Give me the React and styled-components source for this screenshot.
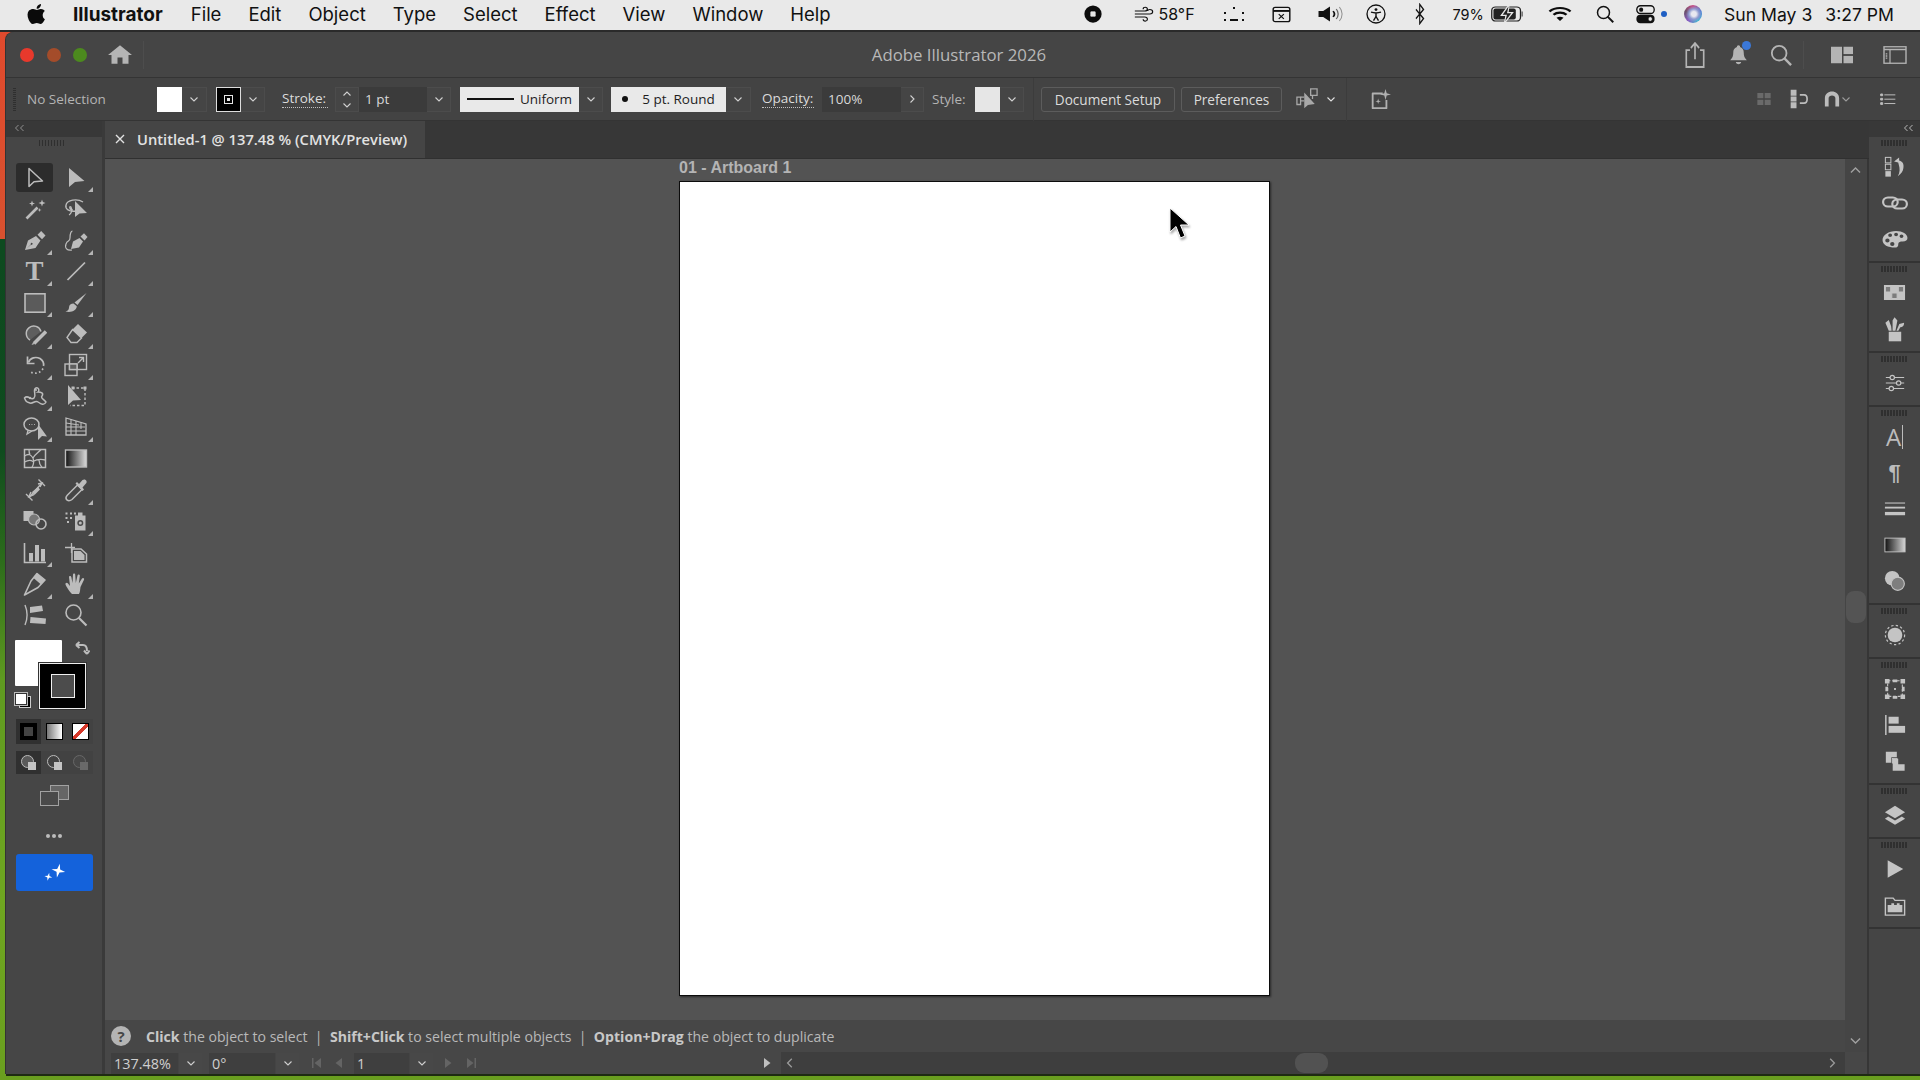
import React from 'react'
import styled, { createGlobalStyle } from 'styled-components'

const GlobalStyle = createGlobalStyle`
    html, body {
        margin: 0;
        padding: 0;
        background: #4a7a18;
    }
    * {
        box-sizing: border-box;
    }
`

const UI_FONT = `"Open Sans", "Noto Sans", sans-serif`
const MAC_FONT = `Inter, "Liberation Sans", sans-serif`

// every icon is drawn in a 24 box, filled parts use currentColor
const F = { fill: 'currentColor', stroke: 'none' }

const ICONS = {
    selection: <path d="M6 2.5V20.5L11 15.8L19.5 15Z" strokeWidth="1.5" strokeLinejoin="round" />,
    direct: <path d="M5 2V21L11 16L20.5 15Z" {...F} />,
    wand: <>
        <path d="M3.5 21.5L14.5 10.5" strokeWidth="2.6" />
        <path d="M9 3.5l.8 2.2 2.2.8-2.2.8L9 9.5l-.8-2.2L6 6.5l2.2-.8zM19 2.5l.9 2.6 2.6.9-2.6.9-.9 2.6-.9-2.6-2.6-.9 2.6-.9zM16.5 11l.5 1.5 1.5.5-1.5.5-.5 1.5-.5-1.5-1.5-.5 1.5-.5z" {...F} />
    </>,
    lasso: <>
        <path d="M12 14C5 15 1 12 2 8C3 3 13 1 19 5" strokeWidth="1.4" />
        <path d="M5 18C7 17 9 13 7 10C5 8 5 13 9 13" strokeWidth="1.2" />
        <path d="M11 4V20L15.5 16.5L23 16Z" {...F} />
    </>,
    pen: <>
        <path d="M2 22L5 12.5L13 8L17.5 12.5L12.5 20ZM7.8 16.5L3.6 20.6L8 16.8C8.6 17.2 9.6 16.8 9.6 15.8C9.6 14.7 8.2 14.4 7.8 15.4C7.6 15.8 7.6 16.2 7.8 16.5Z" fillRule="evenodd" {...F} />
        <path d="M14.5 6.8L19 11.3L22.5 7.5L18.2 3Z" {...F} />
    </>,
    curvature: <>
        <path d="M7 21L9 13.5L15.5 10L19 13.5L15 19.5Z" {...F} />
        <path d="M16.5 8.5L20.5 12.5L23.5 9L20 5.3Z" {...F} />
        <path d="M8 22C3 23 0.5 20 2 16C3.5 12 6 14 6 10C6 6 7 3 8.5 3" strokeWidth="1.2" />
    </>,
    line: <path d="M3.5 21L21 3.5" strokeWidth="1.7" />,
    rect: <rect x="2" y="2.8" width="20" height="18.4" fill="#5b5b5b" strokeWidth="1.6" />,
    brush: <>
        <path d="M22.5 2L13.5 14L10.5 11.5Z" {...F} />
        <path d="M9.5 12.5L12.8 15.2C12.5 19 8 22 1.5 20.5C4.5 19.5 5 18 5 16.5C5 14 7 12.5 9.5 12.5Z" {...F} />
    </>,
    shaper: <>
        <path d="M18 9.5A7.5 7.5 0 1 0 7 18" fill="#5e5e5e" strokeWidth="1.5" />
        <path d="M11 21.5L23 9.5" strokeWidth="3.6" />
        <path d="M8.5 23L10 20.5L11.5 22Z" {...F} />
    </>,
    eraser: <>
        <path d="M14 2L23 10.5L17.5 16L8.5 7.5Z" {...F} />
        <path d="M8.5 7.5L17.5 16L13 20.5H7L3 15.5Z" strokeWidth="1.4" />
    </>,
    rotate: <>
        <path d="M5.5 9.5C7 4.5 13 3.5 17 5.5C20 7.5 21 10.5 20.5 13" strokeWidth="1.7" />
        <path d="M4.5 3.5V10.5H11.5" strokeWidth="1.7" />
        <path d="M20 15.5C17 21 10 21.5 6.5 18" strokeWidth="1.7" strokeDasharray="1.6 2.4" />
    </>,
    scale: <>
        <rect x="5.5" y="1.5" width="17" height="15" strokeWidth="1.4" />
        <rect x="1" y="11" width="12" height="11.5" strokeWidth="1.4" />
        <rect x="5.5" y="11" width="7.5" height="5.5" fill="#5e5e5e" strokeWidth="1.4" />
        <path d="M14 10L19 5M15 4.5H19.5V9" strokeWidth="1.4" />
    </>,
    warp: <>
        <path d="M1.5 14C5 10 8 17 11 14C14 11 9 6 13 4C16 3 16.5 7 15 8C18 8 21 9 19 12C17 14 22 16 23 18C21 22 18 20 15 18C12 16 10 20 7 19C4 18 3 18 1.5 14Z" strokeWidth="1.5" />
        <circle cx="13" cy="6" r="1" {...F} />
        <circle cx="7" cy="14" r="1.2" {...F} />
    </>,
    freeTransform: <>
        <path d="M4 1V21L9 16.5L17 16Z" {...F} />
        <path d="M8 4H21V17" strokeWidth="1.4" strokeDasharray="2.5 2" />
        <path d="M21 18V21.5H6" strokeWidth="1.4" strokeDasharray="2.5 2" />
        <rect x="7.5" y="2.5" width="3" height="3" {...F} />
        <rect x="19.5" y="2.5" width="3" height="3" {...F} />
    </>,
    shapeBuilder: <>
        <ellipse cx="8.5" cy="8.5" rx="7.5" ry="6.5" strokeWidth="1.5" />
        <path d="M15 8L15 24L19 20L24 20.5Z" {...F} />
        <path d="M6 8.5h.9M8.5 8.5h.9M11 8.5h.9" strokeWidth="1.2" />
        <path d="M5 14.5L4 18L9 15" strokeWidth="1.3" />
    </>,
    perspective: <>
        <path d="M2 2L22 8V19H2Z" strokeWidth="1.3" />
        <path d="M2 7L15 9M2 11H21M2 15H22M7 3.5V19M12 5V19M17 6.5V13" strokeWidth="1.1" />
    </>,
    mesh: <>
        <rect x="1.5" y="2.5" width="21" height="18" strokeWidth="1.5" />
        <path d="M1.5 9C6 6 8 8 10 11C12 7 16 5 18 2.5M10 11C11 14 11 17 9 20.5M1.5 15C5 13 8 13 10 14.5C14 12 18 12 22.5 13M16 13C16 16 17 18 19 20.5M6 2.5C6 5 6 6 7 7.5" strokeWidth="1.3" />
    </>,
    gradient: <>
        <defs>
            <linearGradient id="toolGrad">
                <stop offset="0" stopColor="#111" />
                <stop offset="1" stopColor="#dcdcdc" />
            </linearGradient>
        </defs>
        <rect x="1.5" y="3" width="21" height="17" fill="url(#toolGrad)" strokeWidth="1.4" />
    </>,
    measure: <>
        <path d="M3 16L9.5 22.5M15.5 1.5L22 8" strokeWidth="1.4" />
        <path d="M7 18.5L18.5 5.5" strokeWidth="1.5" />
        <path d="M9 14L15 9L17 11.5L11.5 17Z" {...F} />
        <path d="M8 14L6 18.5L11 16.5M17 9L19 5L15 6" strokeWidth="1.5" />
    </>,
    eyedropper: <>
        <path d="M13.5 7L18 11.5L8 21.5C6 23 3.5 23 2.5 21.5C1.5 20 2 18.5 3.5 17Z" strokeWidth="1.5" />
        <path d="M11.5 5.5L13 4L15 6L18.5 2C20 1 22 1.5 22.5 3C23 4.5 22 5.5 21.5 6L18.5 9.5L20 11.5L18.5 13Z" {...F} />
    </>,
    blend: <>
        <rect x="0.5" y="2" width="10" height="10" {...F} />
        <circle cx="11" cy="10.5" r="5.5" fill="#777" strokeWidth="1.2" />
        <circle cx="18" cy="15" r="5" strokeWidth="1.6" />
    </>,
    symbol: <>
        <path d="M14 6.5V3.5H18.5V6.5H21.5V21.5H11V6.5Z" {...F} />
        <circle cx="16.3" cy="14" r="3" fill="#4a4a4a" stroke="none" />
        <circle cx="16.3" cy="14" r="1.5" {...F} />
        <path d="M1.5 3.5h2v2h-2zM6 3.5h2v2H6zM10 3.5h2v2h-2zM1.5 8h2v2h-2zM6 8h2v2H6zM3 12h2v2H3z" {...F} />
    </>,
    graph: <>
        <path d="M1.5 2V21.5H23" strokeWidth="1.6" />
        <rect x="6" y="12" width="4" height="8.5" {...F} />
        <rect x="12" y="4" width="4" height="16.5" {...F} />
        <rect x="18" y="8" width="4" height="12.5" {...F} />
    </>,
    artboard: <>
        <path d="M1 6.5H11M7.5 2V12" strokeWidth="1.3" />
        <path d="M8 8H17L22.5 13V21H8Z" strokeWidth="1.5" />
        <path d="M10 10H16.5L20.5 14V19H10Z" {...F} />
    </>,
    slice: <>
        <path d="M1.5 23L8 9L14 1.5L22 8L15 15.5Z" strokeWidth="1.6" strokeLinejoin="round" />
        <path d="M14 1.5L22 8L18 12.5L10.5 6Z" {...F} />
    </>,
    hand: <path d="M7 21C5 19 2 14 1.5 12.5C1 11 3 10 4 11.5L6 14L5 5C5 3.5 7 3.5 7.3 5L8.5 11L9 2.5C9 1 11.2 1 11.2 2.5L11.8 11L13.5 3.5C14 2 16 2.5 15.8 4L14.8 11.5L18 6.5C19 5.3 20.7 6.3 20 7.8L16.5 15C16 19 16 20 15 22H8Z" {...F} />,
    alignStack: <>
        <path d="M2 2C4.5 8 4.5 16 2 22" strokeWidth="1.4" />
        <path d="M7 4L19 2.5L20 8L7 10ZM7.5 14L23 15.5L22.5 21L7 20Z" {...F} />
    </>,
    zoom: <>
        <circle cx="9.5" cy="9.5" r="7.5" strokeWidth="1.6" />
        <path d="M15 15L22.5 22.5" strokeWidth="2.2" />
    </>,
    // right hand dock
    history: <>
        <rect x="1.5" y="1.5" width="6" height="6" strokeWidth="1.1" />
        <rect x="1.5" y="9" width="6" height="6" strokeWidth="1.1" />
        <rect x="1.5" y="16.5" width="6" height="6" {...F} />
        <path d="M11 6L16.5 1.5V5C21 6 22 10 21 14C20.5 17 19 19.5 15 22C17.5 18 17.5 14 16 9L15.5 7Z" {...F} />
    </>,
    link: <>
        <rect x="1" y="6.5" width="13.5" height="9" rx="4.5" strokeWidth="2" />
        <rect x="9.5" y="8.5" width="13.5" height="9" rx="4.5" strokeWidth="2" />
    </>,
    palette: <path fillRule="evenodd" d="M13 4C6 4 0.5 8 0.5 13C0.5 18 5.5 20.5 12 20.5C15 20.5 15 18.5 15 17C15 15 17 14.5 19 14.5C22 14.5 23.5 13 23.5 11C23.5 7 19 4 13 4ZM5 11.5A2 2 0 1 0 5 15.5A2 2 0 1 0 5 11.5ZM9.5 15A2 2 0 1 0 9.5 19A2 2 0 1 0 9.5 15ZM7.5 6.5A1.8 1.8 0 1 0 7.5 10.1A1.8 1.8 0 1 0 7.5 6.5ZM13 5.7A1.8 1.8 0 1 0 13 9.3A1.8 1.8 0 1 0 13 5.7ZM18 7.5A1.8 1.8 0 1 0 18 11.1A1.8 1.8 0 1 0 18 7.5Z" {...F} />,
    swatches: <>
        <rect x="1" y="4" width="22" height="15" {...F} />
        <rect x="2.5" y="5.5" width="5.5" height="5.5" fill="#7c7c7c" />
        <rect x="16" y="5.5" width="5.5" height="5.5" fill="#7c7c7c" />
        <rect x="9.2" y="12" width="5.5" height="5.5" fill="#7c7c7c" />
    </>,
    brushes: <>
        <path d="M6 14H19V22.5H6Z" {...F} />
        <path d="M6 13L2.5 6L6 3.5L8.5 9L9 13ZM10 13V4L12 1L15 4L13 13ZM14 13L17 7L22 6C22 9 20 10 18 10L16 13Z" {...F} />
    </>,
    sliders: <>
        <path d="M2 6H22M2 12H22M2 18H22" strokeWidth="1.2" />
        <circle cx="9" cy="6" r="2.4" fill="#454545" strokeWidth="1.3" />
        <circle cx="16" cy="12" r="2.4" fill="#454545" strokeWidth="1.3" />
        <circle cx="8" cy="18" r="2.4" fill="#454545" strokeWidth="1.3" />
    </>,
    lines: <>
        <path d="M1 5.5H23" strokeWidth="1.2" />
        <path d="M1 10.5H23" strokeWidth="2" />
        <path d="M1 17H23" strokeWidth="3.6" />
    </>,
    gradientPanel: <>
        <defs>
            <linearGradient id="dockGrad">
                <stop offset="0" stopColor="#111" />
                <stop offset="1" stopColor="#d5d5d5" />
            </linearGradient>
        </defs>
        <rect x="1" y="4.5" width="22" height="15" fill="url(#dockGrad)" strokeWidth="1" />
    </>,
    transparency: <>
        <circle cx="9" cy="9" r="8" {...F} />
        <circle cx="15" cy="15" r="7.2" fill="#7e7e7e" strokeWidth="1.2" />
    </>,
    appearance: <>
        <circle cx="12" cy="12" r="8" {...F} />
        <circle cx="12" cy="12" r="10.5" strokeWidth="1.3" strokeDasharray="2.5 2.5" />
    </>,
    transform: <>
        <path d="M4 3H20V20H4Z" strokeWidth="1.2" strokeDasharray="3 2" />
        <path d="M1 1h5v5H1zM18 1h5v5h-5zM1 18h5v5H1zM18 18h5v5h-5zM9.5 1.5h5v3h-5zM9.5 19.5h5v3h-5zM1.5 9.5h3v5h-3zM19.5 9.5h3v5h-3zM11 11h2v2h-2z" {...F} />
    </>,
    align: <>
        <path d="M2 1V23" strokeWidth="1.6" />
        <rect x="5" y="3" width="11" height="7.5" {...F} />
        <rect x="5" y="13" width="18" height="7.5" {...F} />
    </>,
    pathfinder: <>
        <path d="M2 2H14V8H8V14H2Z" {...F} />
        <path d="M9.5 9.5H15.5V15.5H22.5V22.5H9.5Z" {...F} />
        <rect x="9.2" y="9.2" width="5" height="5" strokeWidth="1" />
    </>,
    layers: <>
        <path d="M12 2L23 9L12 15.5L1 9Z" {...F} />
        <path d="M4.5 13.5L1 16L12 22.5L23 16L19.5 13.5L12 18Z" {...F} />
    </>,
    play: <path d="M4 2.5L21 12L4 21.5Z" {...F} />,
    folder: <>
        <path d="M1.5 4.5H10L12 7H22.5V23H1.5Z" strokeWidth="1.5" />
        <path d="M4 12H8V10H11V12H14V10H17V12H20V20H4Z" {...F} />
    </>,
    // window and control bar
    home: <path d="M12 1.5L24 12.5H20.5V22.5H14.5V15.5H9.5V22.5H3.5V12.5H0Z" {...F} />,
    share: <path d="M6.5 7.5H2.5V23H21.5V7.5H17.5M12 1V16M7.5 5.5L12 1L16.5 5.5" strokeWidth="1.8" />,
    bell: <path d="M12 1.5C13.3 1.5 13.8 2.5 13.8 3.5C17 4.5 18 7 18 10C18 14 19 16 21.5 18.5H2.5C5 16 6 14 6 10C6 7 7 4.5 10.2 3.5C10.2 2.5 10.7 1.5 12 1.5ZM9 20.5H15C15 22 13.5 23 12 23C10.5 23 9 22 9 20.5Z" {...F} />,
    search: <>
        <circle cx="10" cy="10" r="8" strokeWidth="2" />
        <path d="M15.5 15.5L23 23" strokeWidth="2.6" />
    </>,
    workspace: <>
        <rect x="1" y="3" width="11" height="18" {...F} />
        <rect x="13.5" y="3" width="9.5" height="8" {...F} />
        <rect x="13.5" y="13" width="9.5" height="8" {...F} />
    </>,
    panels: <>
        <rect x="1" y="3" width="22" height="18" strokeWidth="1.4" />
        <path d="M1 6H23" strokeWidth="1.6" />
        <path d="M7 6V21" strokeWidth="1.2" />
        <path d="M3.5 10V16" strokeWidth="1.6" strokeDasharray="1.4 1" />
    </>,
    isolate: <>
        <path d="M1 10H5V18H1ZM16 1H23V8H16Z" strokeWidth="1.4" />
        <path d="M5 14H9M18 8V12M5 10H9" strokeWidth="1.4" />
        <path d="M9 5V22L13 18.5L20.5 17.5Z" {...F} />
    </>,
    spark: <>
        <path d="M15 6H4V22H19V13" strokeWidth="2" strokeLinejoin="round" />
        <path d="M18 1L19.3 5.7L24 7L19.3 8.3L18 13L16.7 8.3L12 7L16.7 5.7ZM10 11.5L10.7 13.8L13 14.5L10.7 15.2L10 17.5L9.3 15.2L7 14.5L9.3 13.8Z" {...F} />
    </>,
    gridSnap: <path d="M2 3h9v8H2zM13 3h9v8h-9zM2 13h9v8H2zM13 13h9v8h-9z" {...F} />,
    pointSnap: <>
        <path d="M2 1h7v7H2zM2 9h7v6H2zM2 16h7v7H2z" {...F} />
        <path d="M13 7H18C23 7 23 17 18 17H13" strokeWidth="2" />
    </>,
    magnet: <path d="M2.5 22V11C2.5 -1 21.5 -1 21.5 11V22H16.5V11C16.5 6 7.5 6 7.5 11V22Z" {...F} />,
    listMenu: <path d="M1 4.5h3v2.6H1zM1 11h3v2.6H1zM1 17.5h3v2.6H1zM6.5 5.8H23M6.5 12.3H23M6.5 18.8H23" fill="currentColor" strokeWidth="1.5" />,
    // macOS menu extras
    record: <>
        <circle cx="12" cy="12" r="11.5" {...F} />
        <rect x="8" y="8" width="8" height="8" rx="2" fill="#e8e8e8" />
    </>,
    wind: <path d="M1 8H13C17 8 17 3 13.5 3C12 3 11 4 11 5.5M1 12H19C23.5 12 23.5 6 19 6C17.5 6 16.5 7 16.3 8M1 16H13C17 16 17 21.5 13.5 21.5C12 21.5 11 20.5 11 19" strokeWidth="1.4" />,
    dots: <path d="M2 10h2v2H2zM2 17h2v2H2zM11 5h2v2h-2zM8 17h8v2H8zM20 10h2v2h-2zM20 17h2v2h-2z" {...F} />,
    calendar: <>
        <rect x="1.5" y="3" width="21" height="18" rx="2.5" strokeWidth="1.8" />
        <path d="M1.5 7.5H22.5" strokeWidth="2.4" />
        <path d="M8.5 11.5L15 17.5M15 11.5L8.5 17.5" strokeWidth="1.5" />
    </>,
    volume: <>
        <path d="M0.5 8.5H5L11.5 3V21L5 15.5H0.5Z" {...F} />
        <path d="M14.5 8.5C16 10.5 16 13.5 14.5 15.5" strokeWidth="1.7" />
        <path d="M17.5 6C20 9.5 20 14.5 17.5 18" strokeWidth="1.2" opacity=".6" />
        <path d="M20.5 3.5C24 8.5 24 15.5 20.5 20.5" strokeWidth="1" opacity=".4" />
    </>,
    access: <>
        <circle cx="12" cy="12" r="10.8" strokeWidth="1.6" />
        <circle cx="12" cy="6.7" r="1.7" {...F} />
        <path d="M6 9.8C10 11 14 11 18 9.8M12 11V15M12 15L9 20M12 15L15 20" strokeWidth="1.7" />
    </>,
    bluetooth: <path d="M5 7L18 17L11.5 22.5V1.5L18 7L5 17" strokeWidth="1.9" />,
    battery: <>
        <rect x="0.7" y="5" width="27" height="14" rx="3.5" strokeWidth="1.2" />
        <rect x="2.3" y="6.6" width="21" height="10.8" rx="2" {...F} />
        <path d="M29.3 9.5V14.5" strokeWidth="1.4" opacity=".6" />
        <path d="M17 2.5L9.5 13.5H14L12.5 21.5L20.5 10.5H16Z" fill="#e8e8e8" stroke="#e8e8e8" strokeWidth="1" />
        <path d="M16.5 4.5L11 12.8H15L13.5 19L19 11.2H15Z" {...F} />
    </>,
    wifi: <>
        <path d="M1.5 9C7 3.5 17 3.5 22.5 9" strokeWidth="2.5" />
        <path d="M5.5 13C9 9.5 15 9.5 18.5 13" strokeWidth="2.5" />
        <path d="M12 20.5L8.5 16.5C10.5 15 13.5 15 15.5 16.5Z" {...F} />
    </>,
    control: <>
        <rect x="1" y="2" width="22" height="9.5" rx="4.7" strokeWidth="1.7" />
        <circle cx="6.5" cy="6.8" r="2.6" {...F} />
        <rect x="0.5" y="13" width="23" height="10" rx="5" {...F} />
        <circle cx="18" cy="18" r="2.8" fill="#e8e8e8" />
    </>,
}

const IconSvg = styled.svg`
    display: block;
    flex: none;
    width: ${p => p.$w}px;
    height: ${p => p.$h}px;
    color: ${p => p.$color};
    fill: none;
    stroke: currentColor;
`

const Icon = ({ name, size = 24, height, color = '#bcbcbc', box = 24 }) => (
    <IconSvg $w={size} $h={height || size} $color={color} viewBox={`0 0 ${box} 24`} preserveAspectRatio="none">
        {ICONS[name]}
    </IconSvg>
)

const Chevron = ({ dir = 'down', size = 10, color = '#d0d0d0' }) => {
    const d = {
        down: 'M1.5 3.5L5 7L8.5 3.5',
        up: 'M1.5 6.5L5 3L8.5 6.5',
        right: 'M3.5 1.5L7 5L3.5 8.5',
        left: 'M6.5 1.5L3 5L6.5 8.5',
    }[dir]
    return (
        <IconSvg $w={size} $h={size} $color={color} viewBox="0 0 10 10">
            <path d={d} strokeWidth="1.1" />
        </IconSvg>
    )
}

const Screen = styled.div`
    width: 1920px;
    height: 1080px;
    overflow: hidden;
    display: flex;
    flex-direction: column;
    font-family: ${UI_FONT};
    background: linear-gradient(to bottom,
        #e2492d 0, #d8512f 239px,
        #0d4a1f 239px, #0f4b1e 450px,
        #2c6c1b 560px, #5f9a20 680px,
        #6fa620 900px, #6a9f1f 1080px);
`

/* macOS menu bar */
const MenuBar = styled.div`
    flex: none;
    height: 32px;
    display: flex;
    align-items: center;
    justify-content: space-between;
    padding: 0 26px 2px 27px;
    background: #e9e9e9;
    border-bottom: 2px solid #2a2a2a;
    color: #111;
    font-family: ${MAC_FONT};
    font-size: 18.5px;
`

const MenuLeft = styled.div`
    display: flex;
    align-items: center;
`

const AppleLogo = styled.svg`
    display: block;
    width: 20px;
    height: 22px;
    margin-right: 26px;
    fill: #0a0a0a;
`

const MenuItem = styled.span`
    margin-right: ${p => (p.$bold ? 28 : 27)}px;
    font-size: ${p => (p.$bold ? 19 : 18.5)}px;
    font-weight: ${p => (p.$bold ? 700 : 400)};
`

const MenuRight = styled.div`
    display: flex;
    align-items: center;
`

const Extra = styled.div`
    flex: none;
    width: ${p => p.$w}px;
    display: flex;
    align-items: center;
    justify-content: center;
    gap: ${p => p.$gap || 0}px;
    font-size: ${p => p.$size || 17}px;
`

const BlueDot = styled.span`
    width: 6px;
    height: 6px;
    border-radius: 50%;
    background: #1f5fc4;
`

const Siri = styled.span`
    width: 18px;
    height: 18px;
    border-radius: 50%;
    background: radial-gradient(circle at 55% 50%, #e8e8f0 0 18%, #8f9bd0 38%, transparent 60%),
        conic-gradient(#c94f86, #4d7fd6, #3fb7d0, #8a5fc4, #6a4f6a, #c94f86);
`

const Clock = styled.span`
    margin-left: 5px;
    display: flex;
    gap: 13px;
    font-size: 17.6px;
    white-space: nowrap;
`

/* illustrator window */
const AppWindow = styled.div`
    flex: none;
    height: 1042px;
    margin-left: 6px;
    display: flex;
    flex-direction: column;
    overflow: hidden;
    border-top-left-radius: 8px;
    background: #444;
    box-shadow: -1px 0 0 #333, 0 2px 0 #1e2b12;
`

const TitleBar = styled.div`
    flex: none;
    height: 46px;
    position: relative;
    display: flex;
    align-items: center;
    padding-left: 14px;
    background: #454545;
    border-bottom: 1px solid #343434;
`

const Light = styled.span`
    width: 14px;
    height: 14px;
    border-radius: 50%;
    margin-right: 12.5px;
    background: ${p => p.$color};
`

const HomeButton = styled.div`
    width: 22px;
    margin-left: 8px;
`

const TitleDivider = styled.span`
    width: 1px;
    height: 28px;
    margin-left: ${p => p.$ml || 0}px;
    margin-right: ${p => p.$mr || 0}px;
    background: #4d4d4d;
`

const TitleText = styled.div`
    position: absolute;
    left: 0;
    right: 0;
    top: 0;
    bottom: 0;
    margin-left: -8px;
    display: flex;
    align-items: center;
    justify-content: center;
    color: #b8b8b8;
    font-size: 16.8px;
    pointer-events: none;
`

const TitleRight = styled.div`
    margin-left: auto;
    display: flex;
    align-items: center;
    z-index: 1;
`

const TitleSlot = styled.div`
    position: relative;
    width: ${p => p.$w}px;
    display: flex;
    justify-content: center;
`

const NoticeDot = styled.span`
    position: absolute;
    top: -3px;
    right: 8px;
    width: 9px;
    height: 9px;
    border-radius: 50%;
    background: #3b78d8;
`

/* control bar */
const ControlBar = styled.div`
    flex: none;
    height: 43px;
    display: flex;
    align-items: center;
    padding-left: 21px;
    position: relative;
    background: #434343;
    border-bottom: 1px solid #343434;
    color: #d4d4d4;
    font-size: 13.5px;
`

const Grip = styled.span`
    position: absolute;
    left: 7px;
    top: 10px;
    width: 3px;
    height: 24px;
    background: repeating-linear-gradient(to bottom, #2f2f2f 0 1px, transparent 1px 2px);
`

const ControlLabel = styled.span`
    flex: none;
    width: ${p => p.$w}px;
    margin-left: ${p => p.$ml || 0}px;
    color: ${p => (p.$dim ? '#b4b4b4' : '#cfcfcf')};
    white-space: nowrap;
`

const DottedLabel = styled(ControlLabel)`
    height: 18px;
    line-height: 17px;
    font-size: 13.5px;
    font-weight: 500;
    color: #dcdcdc;
    border-bottom: 1px dotted #c0c0c0;
`

const Combo = styled.div`
    flex: none;
    height: 25px;
    margin-left: ${p => p.$ml || 0}px;
    display: flex;
    background: #454545;
`

const Swatch = styled.div`
    width: ${p => p.$w || 25}px;
    height: 25px;
    background: ${p => p.$bg};
    border: ${p => p.$border || 'none'};
    display: flex;
    align-items: center;
    justify-content: center;
    gap: 6px;
    color: #1e1e1e;
    white-space: nowrap;
`

const StrokeMini = styled.span`
    width: 9px;
    height: 9px;
    border: 1.5px solid #e5e5e5;
    display: flex;
    align-items: center;
    justify-content: center;
    &::after {
        content: '';
        width: 3px;
        height: 3px;
        background: #e5e5e5;
    }
`

const StrokeLine = styled.span`
    width: 47px;
    height: 2px;
    background: #111;
`

const RoundDot = styled.span`
    width: 6px;
    height: 6px;
    margin-right: 8px;
    border-radius: 50%;
    background: #111;
`

const ArrowCell = styled.div`
    width: ${p => p.$w || 25}px;
    height: 25px;
    display: flex;
    align-items: center;
    justify-content: center;
    border: 1px solid #4c4c4c;
    border-left: none;
`

const StepperCell = styled.div`
    width: 24px;
    height: 25px;
    display: flex;
    flex-direction: column;
    align-items: center;
    justify-content: center;
    gap: 1px;
    border: 1px solid #4c4c4c;
`

const FieldCell = styled.div`
    width: ${p => p.$w}px;
    height: 25px;
    padding-left: 6px;
    line-height: 24px;
    background: #3b3b3b;
    color: #d8d8d8;
    font-size: 13.5px;
`

const ControlDivider = styled.span`
    flex: none;
    width: 1px;
    height: 43px;
    margin-left: ${p => p.$ml}px;
    background: #3c3c3c;
`

const SetupButton = styled.button`
    flex: none;
    width: ${p => p.$w}px;
    height: 25px;
    margin-left: ${p => p.$ml}px;
    padding: 0;
    border: 1px solid #5c5c5c;
    border-radius: 3px;
    background: #434343;
    color: #dcdcdc;
    font-family: ${UI_FONT};
    font-size: 13.6px;
`

const ControlSlot = styled.div`
    flex: none;
    width: ${p => p.$w}px;
    margin-left: ${p => p.$ml || 0}px;
    display: flex;
    align-items: center;
    justify-content: center;
`

const ControlRight = styled.div`
    margin-left: auto;
    padding-right: 24px;
    display: flex;
    align-items: center;
`

/* panels and canvas */
const Workspace = styled.div`
    flex: 1;
    min-height: 0;
    display: flex;
`

const ToolPanel = styled.div`
    flex: none;
    width: 99px;
    display: flex;
    flex-direction: column;
    background: #464646;
    border-right: 3px solid #3a3a3a;
`

const CollapseStrip = styled.div`
    flex: none;
    height: 16px;
    display: flex;
    align-items: center;
    justify-content: ${p => (p.$end ? 'flex-end' : 'flex-start')};
    padding: 0 6px 2px 8px;
    background: #383838;
`

const GripBar = styled.div`
    flex: none;
    width: 27px;
    height: 6px;
    margin: ${p => p.$m || '3px auto'};
    background: repeating-linear-gradient(to right, #2f2f2f 0 1.5px, transparent 1.5px 3px);
`

const ToolGrid = styled.div`
    display: grid;
    grid-template-columns: repeat(2, 41px);
    grid-auto-rows: 31.25px;
    margin-top: 13px;
    padding-left: 8px;
`

const Tool = styled.div`
    position: relative;
    display: flex;
    align-items: center;
    justify-content: center;
    &::before {
        content: '';
        display: ${p => (p.$active ? 'block' : 'none')};
        position: absolute;
        left: 2px;
        right: 2px;
        top: 1px;
        bottom: 1px;
        border-radius: 3px;
        background: #2c2c2c;
    }
    &::after {
        content: '';
        display: ${p => (p.$corner ? 'block' : 'none')};
        position: absolute;
        right: 3px;
        bottom: 1px;
        border-style: solid;
        border-width: 0 0 5px 5px;
        border-color: transparent transparent #b4b4b4 transparent;
    }
    svg {
        position: relative;
    }
`

const GlyphIcon = styled.span`
    display: block;
    color: #bcbcbc;
    font-family: ${p => p.$font || '"Liberation Serif", serif'};
    font-size: ${p => p.$size}px;
    font-weight: ${p => p.$weight || 700};
    line-height: 1;
    ${p => (p.$bar ? 'border-right: 1px solid #bcbcbc; padding-right: 1px;' : '')}
`

const ColorWell = styled.div`
    position: relative;
    flex: none;
    height: 78px;
    margin-top: 9px;
`

const FillWell = styled.div`
    position: absolute;
    left: 9px;
    top: 0;
    width: 47px;
    height: 46px;
    background: #fff;
    border-radius: 1px;
`

const StrokeWell = styled.div`
    position: absolute;
    left: 33px;
    top: 23px;
    width: 47px;
    height: 46px;
    display: flex;
    align-items: center;
    justify-content: center;
    background: #000;
    border: 1px solid #eee;
    box-shadow: 0 0 0 1px #333;
`

const StrokeHole = styled.div`
    width: 24px;
    height: 24px;
    background: #4c4c4c;
    border: 1.5px solid #f0f0f0;
`

const SwapArrow = styled.svg`
    position: absolute;
    left: 68px;
    top: 0;
    width: 16px;
    height: 16px;
    fill: none;
    stroke: #bcbcbc;
`

const DefaultIcon = styled.div`
    position: absolute;
    left: 9px;
    top: 53px;
    width: 16px;
    height: 15px;
    &::before, &::after {
        content: '';
        position: absolute;
        width: 10px;
        height: 10px;
        border: 1.5px solid #ccc;
    }
    &::before {
        right: 0;
        bottom: 0;
        background: #000;
    }
    &::after {
        left: 0;
        top: 0;
        background: #fff;
        border-color: #333;
        box-shadow: 0 0 0 1px #bbb;
    }
`

const ModeRow = styled.div`
    display: flex;
    gap: 1px;
    height: ${p => p.$h}px;
    width: 77px;
    margin: ${p => p.$m} 0 0 10px;
    background: #424242;
`

const ModeCell = styled.div`
    flex: 1;
    display: flex;
    align-items: center;
    justify-content: center;
    background: ${p => (p.$active ? '#303030' : 'transparent')};
`

const ModeSwatch = styled.div`
    width: 17px;
    height: 17px;
    background: ${p => p.$bg};
    border: ${p => p.$border || 'none'};
    display: flex;
    align-items: center;
    justify-content: center;
`

const ModeInner = styled.span`
    width: 9px;
    height: 9px;
    background: #444;
`

const DrawMode = styled.span`
    position: relative;
    width: 15px;
    height: 15px;
    opacity: ${p => (p.$dim ? 0.3 : 1)};
    &::before {
        content: '';
        position: absolute;
        left: 0;
        top: 0;
        width: 11px;
        height: 11px;
        border-radius: 50%;
        border: 1.5px solid #bcbcbc;
        background: ${p => p.$fill || 'transparent'};
    }
    &::after {
        content: '';
        position: absolute;
        right: 0;
        bottom: 0;
        width: 8px;
        height: 8px;
        background: #c4c4c4;
    }
`

const ScreenMode = styled.div`
    position: relative;
    width: 29px;
    height: 22px;
    margin: 11px 0 0 34px;
`

const ScreenBack = styled.span`
    position: absolute;
    right: 0;
    top: 0;
    width: 19px;
    height: 15px;
    background: #666;
    border: 1.5px solid #a2a2a2;
`

const ScreenFront = styled(ScreenBack)`
    left: 0;
    right: auto;
    top: 6px;
    height: 15px;
    background: #4a4a4a;
`

const MoreDots = styled.div`
    display: flex;
    justify-content: center;
    gap: 2px;
    margin: 27px 0 0 0;
    span {
        width: 4px;
        height: 4px;
        border-radius: 50%;
        background: #bcbcbc;
    }
`

const SparkButton = styled.div`
    width: 77px;
    height: 37px;
    margin: 16px 0 0 10px;
    display: flex;
    align-items: center;
    justify-content: center;
    border-radius: 3px;
    background: #1462db;
`

const Center = styled.div`
    flex: 1;
    min-width: 0;
    display: flex;
    flex-direction: column;
`

const TabBar = styled.div`
    flex: none;
    height: 38px;
    display: flex;
    background: #373737;
    border-bottom: 1px solid #303030;
`

const DocTab = styled.div`
    width: 320px;
    height: 37px;
    display: flex;
    align-items: center;
    gap: 12px;
    padding: 0 0 2px 10px;
    background: #454545;
    color: #e2e2e2;
    font-size: 14.7px;
    font-weight: 600;
    white-space: nowrap;
`

const CanvasRow = styled.div`
    flex: 1;
    min-height: 0;
    display: flex;
`

const CanvasColumn = styled.div`
    flex: 1;
    min-width: 0;
    display: flex;
    flex-direction: column;
`

const Canvas = styled.div`
    flex: 1;
    min-height: 0;
    padding-left: 574px;
    background: #535353;
    overflow: hidden;
`

const ArtboardLabel = styled.div`
    height: 16px;
    margin: 1px 0 5px;
    line-height: 16px;
    color: #b4b4b4;
    font-family: "Liberation Sans", sans-serif;
    font-size: 16px;
    font-weight: 700;
`

const Artboard = styled.div`
    position: relative;
    width: 591px;
    height: 815px;
    background: #fff;
    border: 1px solid #0c0c0c;
    box-shadow: 1px 1px 2px rgba(0, 0, 0, .5);
`

const Cursor = styled.svg`
    position: absolute;
    left: 488px;
    top: 25px;
    width: 24px;
    height: 34px;
    filter: drop-shadow(1px 2px 1px rgba(0, 0, 0, .35));
`

const HelpBar = styled.div`
    flex: none;
    height: 32px;
    display: flex;
    align-items: center;
    padding-left: 6px;
    background: #474747;
    color: #b9b9b9;
    font-size: 14.1px;
    white-space: pre;
    b {
        font-weight: 700;
        color: #c8c8c8;
    }
`

const HelpIcon = styled.span`
    width: 20px;
    height: 20px;
    margin-right: 15px;
    border-radius: 50%;
    display: flex;
    align-items: center;
    justify-content: center;
    background: #b4b4b4;
    color: #474747;
    font-size: 15px;
    font-weight: 700;
`

const VScroll = styled.div`
    flex: none;
    width: 24px;
    display: flex;
    flex-direction: column;
    align-items: center;
    padding: 5px 1px 5px 0;
    background: #454545;
    border-right: 2px solid #363636;
`

const VThumb = styled.div`
    width: 20px;
    height: 32px;
    margin: 414px 0 auto;
    border-radius: 8px;
    background: #545454;
`

const StatusBar = styled.div`
    flex: none;
    height: 22px;
    display: flex;
    align-items: stretch;
    background: #474747;
    color: #cfcfcf;
    font-size: 14.4px;
    border-right: 2px solid #363636;
`

const StatusCells = styled.div`
    flex: none;
    width: 676px;
    display: flex;
    align-items: center;
    padding-left: 6px;
`

const StatusField = styled.div`
    flex: none;
    width: ${p => p.$w}px;
    height: 21px;
    margin-left: ${p => p.$ml || 0}px;
    display: flex;
    align-items: center;
    padding-left: 3px;
    background: #3f3f3f;
    justify-content: space-between;
`

const StatusArrow = styled.span`
    width: 24px;
    height: 21px;
    display: flex;
    align-items: center;
    justify-content: center;
    background: #484848;
    border-left: 1px solid #444;
`

const NavGlyph = styled.svg`
    flex: none;
    width: 11px;
    height: 12px;
    margin-left: ${p => p.$ml}px;
    fill: ${p => p.$color || '#646464'};
`

const HScroll = styled.div`
    flex: 1;
    display: flex;
    align-items: center;
    padding-left: 3px;
    background: #3e3e3e;
`

const HThumb = styled.div`
    width: 33px;
    height: 20px;
    margin-left: 499px;
    border-radius: 9px;
    background: #525252;
`

const HEnd = styled.div`
    margin-left: auto;
    margin-right: 7px;
`

const CornerBox = styled.div`
    flex: none;
    width: 22px;
    background: #474747;
`

const Dock = styled.div`
    flex: none;
    width: 51px;
    display: flex;
    flex-direction: column;
    background: #454545;
`

const DockSection = styled.div`
    flex: none;
    padding-bottom: 4px;
    border-bottom: 2px solid #333;
`

const DockSlot = styled.div`
    height: 36px;
    display: flex;
    align-items: center;
    justify-content: center;
`

const TOOLS = [
    ['selection', false, true],
    ['direct', true],
    ['wand'],
    ['lasso'],
    ['pen', true],
    ['curvature', true],
    ['type', true],
    ['line', true],
    ['rect', true],
    ['brush', true],
    ['shaper', true],
    ['eraser', true],
    ['rotate', true],
    ['scale', true],
    ['warp', true],
    ['freeTransform'],
    ['shapeBuilder', true],
    ['perspective', true],
    ['mesh'],
    ['gradient'],
    ['measure'],
    ['eyedropper', true],
    ['blend'],
    ['symbol', true],
    ['graph', true],
    ['artboard'],
    ['slice', true],
    ['hand', true],
    ['alignStack'],
    ['zoom'],
]

const DOCK = [
    ['history', 'link', 'palette'],
    ['swatches', 'brushes'],
    ['sliders'],
    ['character', 'paragraph', 'lines', 'gradientPanel', 'transparency'],
    ['appearance'],
    ['transform', 'align', 'pathfinder'],
    ['layers'],
    ['play', 'folder'],
]

// a few dock icons run wider or taller than the others
const DOCK_SIZES = {
    link: [26, 24],
    palette: [26, 24],
    brushes: [23, 27],
    swatches: [23, 24],
}

const MENUS = ['File', 'Edit', 'Object', 'Type', 'Select', 'Effect', 'View', 'Window', 'Help']

const Collapse = ({ color = '#8f8f8f' }) => (
    <IconSvg $w={11} $h={8} $color={color} viewBox="0 0 11 8">
        <path d="M4.5 1L1.5 4L4.5 7M9.5 1L6.5 4L9.5 7" strokeWidth="1" />
    </IconSvg>
)

const App = () => {
    return (
        <Screen>
            <GlobalStyle />
            <MenuBar>
                <MenuLeft>
                    <AppleLogo viewBox="0 0 20 22">
                        <path d="M14 1C14.2 3.5 12 6 9.7 5.8C9.4 3.4 11.7 1.2 14 1ZM17.9 16.3C17 18.3 15.5 21 13.7 21C12.1 21 11.7 20 9.8 20C7.9 20 7.4 21 5.9 21C4 21 2.6 18.5 1.7 16.7C0 13 .2 9.6 2 7.6C3.2 6.2 5 5.8 6.3 5.9C7.8 6 8.9 6.9 9.9 6.9C10.9 6.9 12.2 5.8 14 5.9C15.5 6 16.9 6.7 17.9 8C14.8 9.9 15.2 14.9 17.9 16.3Z" />
                    </AppleLogo>
                    <MenuItem $bold>Illustrator</MenuItem>
                    {MENUS.map(m => <MenuItem key={m}>{m}</MenuItem>)}
                </MenuLeft>
                <MenuRight>
                    <Extra $w={28}><Icon name="record" size={18} color="#0c0c0c" /></Extra>
                    <Extra $w={115} $gap={4} $size={16}><Icon name="wind" size={20} height={18} color="#111" />58°F</Extra>
                    <Extra $w={23}><Icon name="dots" size={24} color="#111" /></Extra>
                    <Extra $w={72}><Icon name="calendar" size={19} color="#111" /></Extra>
                    <Extra $w={26}><Icon name="volume" size={25} height={20} color="#111" /></Extra>
                    <Extra $w={66}><Icon name="access" size={20} color="#111" /></Extra>
                    <Extra $w={22}><Icon name="bluetooth" size={14} height={22} color="#111" /></Extra>
                    <Extra $w={114} $gap={7} $size={14.5}>79%<Icon name="battery" size={33} height={24} box={31} color="#222" /></Extra>
                    <Extra $w={30}><Icon name="wifi" size={24} height={20} color="#0c0c0c" /></Extra>
                    <Extra $w={60}><Icon name="search" size={18} color="#111" /></Extra>
                    <Extra $w={32} $gap={6}><Icon name="control" size={19} height={20} color="#111" /><BlueDot /></Extra>
                    <Extra $w={52}><Siri /></Extra>
                    <Clock><span>Sun May 3</span><span>3:27 PM</span></Clock>
                </MenuRight>
            </MenuBar>

            <AppWindow>
                <TitleBar>
                    <Light $color="#e8392c" />
                    <Light $color="#a44c2a" />
                    <Light $color="#4c8a1e" />
                    <HomeButton><Icon name="home" size={24} height={21} color="#b4b4b4" /></HomeButton>
                    <TitleDivider $ml={13} />
                    <TitleText>Adobe Illustrator 2026</TitleText>
                    <TitleRight>
                        <TitleSlot $w={44}><Icon name="share" size={22} height={26} color="#b4b4b4" /></TitleSlot>
                        <TitleSlot $w={42}><Icon name="bell" size={21} color="#b4b4b4" /><NoticeDot /></TitleSlot>
                        <TitleSlot $w={44}><Icon name="search" size={22} color="#b4b4b4" /></TitleSlot>
                        <TitleDivider $mr={6} />
                        <TitleSlot $w={64}><Icon name="workspace" size={24} height={22} color="#b4b4b4" /></TitleSlot>
                        <TitleSlot $w={42}><Icon name="panels" size={24} height={22} color="#b4b4b4" /></TitleSlot>
                        <TitleSlot $w={4} />
                    </TitleRight>
                </TitleBar>

                <ControlBar>
                    <Grip />
                    <ControlLabel $w={130} $dim>No Selection</ControlLabel>
                    <Combo>
                        <Swatch $bg="#fff" />
                        <ArrowCell><Chevron /></ArrowCell>
                    </Combo>
                    <Combo $ml={9}>
                        <Swatch $bg="#000" $border="1px solid #ddd"><StrokeMini /></Swatch>
                        <ArrowCell $w={24}><Chevron /></ArrowCell>
                    </Combo>
                    <DottedLabel $w={46} $ml={17}>Stroke:</DottedLabel>
                    <Combo $ml={7}>
                        <StepperCell><Chevron dir="up" /><Chevron /></StepperCell>
                        <FieldCell $w={68}>1 pt</FieldCell>
                        <ArrowCell $w={24}><Chevron /></ArrowCell>
                    </Combo>
                    <Combo $ml={9}>
                        <Swatch $w={119} $bg="#e9e9e9"><StrokeLine />Uniform</Swatch>
                        <ArrowCell $w={24}><Chevron /></ArrowCell>
                    </Combo>
                    <Combo $ml={8}>
                        <Swatch $w={115} $bg="#e9e9e9"><RoundDot />5 pt. Round</Swatch>
                        <ArrowCell><Chevron /></ArrowCell>
                    </Combo>
                    <DottedLabel $w={52} $ml={11}>Opacity:</DottedLabel>
                    <Combo $ml={8}>
                        <FieldCell $w={79}>100%</FieldCell>
                        <ArrowCell $w={23}><Chevron dir="right" /></ArrowCell>
                    </Combo>
                    <ControlLabel $w={34} $ml={8} $dim>Style:</ControlLabel>
                    <Combo $ml={9}>
                        <Swatch $bg="#e6e6e6" />
                        <ArrowCell $w={24}><Chevron /></ArrowCell>
                    </Combo>
                    <ControlDivider $ml={9} />
                    <SetupButton $w={134} $ml={7}>Document Setup</SetupButton>
                    <SetupButton $w={101} $ml={6}>Preferences</SetupButton>
                    <ControlSlot $w={22} $ml={14}><Icon name="isolate" size={22} color="#a8a8a8" /></ControlSlot>
                    <ControlSlot $w={14} $ml={6}><Chevron color="#e0e0e0" /></ControlSlot>
                    <ControlDivider $ml={8} />
                    <ControlSlot $w={22} $ml={22}><Icon name="spark" size={22} color="#b0b0b0" /></ControlSlot>
                    <ControlRight>
                        <Icon name="gridSnap" size={16} color="#6a6a6a" />
                        <ControlSlot $w={20} $ml={17}><Icon name="pointSnap" size={20} color="#bcbcbc" /></ControlSlot>
                        <ControlSlot $w={18} $ml={14}><Icon name="magnet" size={18} color="#bcbcbc" /></ControlSlot>
                        <ControlSlot $w={10}><Chevron color="#9a9a9a" /></ControlSlot>
                        <ControlSlot $w={16} $ml={29}><Icon name="listMenu" size={16} color="#bcbcbc" /></ControlSlot>
                    </ControlRight>
                </ControlBar>

                <Workspace>
                    <ToolPanel>
                        <CollapseStrip><Collapse /></CollapseStrip>
                        <GripBar $m="3px 0 3px 33px" />
                        <ToolGrid>
                            {TOOLS.map(([name, corner, active]) => (
                                <Tool key={name} $corner={corner} $active={active}>
                                    {name === 'type'
                                        ? <GlyphIcon $size={27}>T</GlyphIcon>
                                        : <Icon name={name} />}
                                </Tool>
                            ))}
                        </ToolGrid>
                        <ColorWell>
                            <FillWell />
                            <StrokeWell><StrokeHole /></StrokeWell>
                            <SwapArrow viewBox="0 0 16 16">
                                <path d="M2 5L5.5 2M2 5L5.5 8M2 5H9C12 5 13 8 13 11M13 14L10 10.5M13 14L15.5 10.5" strokeWidth="2" />
                            </SwapArrow>
                            <DefaultIcon />
                        </ColorWell>
                        <ModeRow $h={25} $m="1px">
                            <ModeCell $active><ModeSwatch $bg="#000"><ModeInner /></ModeSwatch></ModeCell>
                            <ModeCell><ModeSwatch $bg="linear-gradient(to right,#777,#fff)" $border="1.5px solid #000" /></ModeCell>
                            <ModeCell><ModeSwatch $bg="linear-gradient(to top left,#fff 42%,#d8392b 42% 58%,#fff 58%)" $border="1.5px solid #000" /></ModeCell>
                        </ModeRow>
                        <ModeRow $h={23} $m="7px">
                            <ModeCell $active><DrawMode $fill="#5a5a5a" /></ModeCell>
                            <ModeCell><DrawMode /></ModeCell>
                            <ModeCell><DrawMode $dim $fill="#555" /></ModeCell>
                        </ModeRow>
                        <ScreenMode>
                            <ScreenBack />
                            <ScreenFront />
                        </ScreenMode>
                        <MoreDots><span /><span /><span /></MoreDots>
                        <SparkButton>
                            <IconSvg $w={22} $h={22} $color="#fff" viewBox="0 0 22 22">
                                <path d="M14 2L15.5 7.5L21 9L15.5 10.5L14 16L12.5 10.5L7 9L12.5 7.5ZM5.5 13L6.4 16.1L9.5 17L6.4 17.9L5.5 21L4.6 17.9L1.5 17L4.6 16.1Z" fill="#fff" stroke="none" transform="rotate(12 11 11)" />
                            </IconSvg>
                        </SparkButton>
                    </ToolPanel>

                    <Center>
                        <TabBar>
                            <DocTab>
                                <IconSvg $w={10} $h={10} $color="#e2e2e2" viewBox="0 0 10 10">
                                    <path d="M1 1L9 9M9 1L1 9" strokeWidth="1.4" />
                                </IconSvg>
                                Untitled-1 @ 137.48 % (CMYK/Preview)
                            </DocTab>
                        </TabBar>
                        <CanvasRow>
                            <CanvasColumn>
                                <Canvas>
                                    <ArtboardLabel>01 - Artboard 1</ArtboardLabel>
                                    <Artboard>
                                        <Cursor viewBox="0 0 24 34">
                                            <path d="M2 1V25L8 19.5L12.5 31L17 29L12.5 18H21Z" fill="#000" stroke="#fff" strokeWidth="1" />
                                        </Cursor>
                                    </Artboard>
                                </Canvas>
                                <HelpBar>
                                    <HelpIcon>?</HelpIcon>
                                    <b>Click</b> the object to select  |  <b>Shift+Click</b> to select multiple objects  |  <b>Option+Drag</b> the object to duplicate
                                </HelpBar>
                            </CanvasColumn>
                            <VScroll>
                                <Chevron dir="up" size={13} color="#a0a0a0" />
                                <VThumb />
                                <Chevron size={13} color="#a0a0a0" />
                            </VScroll>
                        </CanvasRow>
                        <StatusBar>
                            <StatusCells>
                                <StatusField $w={91}>137.48%<StatusArrow><Chevron /></StatusArrow></StatusField>
                                <StatusField $w={90} $ml={7}>0°<StatusArrow><Chevron /></StatusArrow></StatusField>
                                <NavGlyph $ml={12} viewBox="0 0 11 12"><path d="M1 1h1.5v10H1zM10 1V11L3.5 6Z" /></NavGlyph>
                                <NavGlyph $ml={11} viewBox="0 0 11 12"><path d="M9 1V11L2.5 6Z" /></NavGlyph>
                                <StatusField $w={79} $ml={10}>1<StatusArrow><Chevron /></StatusArrow></StatusField>
                                <NavGlyph $ml={10} viewBox="0 0 11 12"><path d="M2 1V11L8.5 6Z" /></NavGlyph>
                                <NavGlyph $ml={12} viewBox="0 0 11 12"><path d="M1 1V11L7.5 6ZM8.5 1H10V11H8.5z" /></NavGlyph>
                                <NavGlyph $ml={285} $color="#c0c0c0" viewBox="0 0 11 12"><path d="M2 1V11L8.5 6Z" /></NavGlyph>
                            </StatusCells>
                            <HScroll>
                                <Chevron dir="left" size={12} color="#9a9a9a" />
                                <HThumb />
                                <HEnd><Chevron dir="right" size={12} color="#9a9a9a" /></HEnd>
                            </HScroll>
                            <CornerBox />
                        </StatusBar>
                    </Center>

                    <Dock>
                        <CollapseStrip $end><Collapse color="#b8b8b8" /></CollapseStrip>
                        {DOCK.map(section => (
                            <DockSection key={section[0]}>
                                <GripBar />
                                {section.map(name => {
                                    const [w, h] = DOCK_SIZES[name] || [22, 22]
                                    return (
                                        <DockSlot key={name}>
                                            {name === 'character' && <GlyphIcon $size={24} $weight={400} $font={UI_FONT} $bar>A</GlyphIcon>}
                                            {name === 'paragraph' && <GlyphIcon $size={22} $font={`"Liberation Sans", sans-serif`}>¶</GlyphIcon>}
                                            {ICONS[name] && <Icon name={name} size={w} height={h} color="#c4c4c4" />}
                                        </DockSlot>
                                    )
                                })}
                            </DockSection>
                        ))}
                    </Dock>
                </Workspace>
            </AppWindow>
        </Screen>
    )
}

export default App
